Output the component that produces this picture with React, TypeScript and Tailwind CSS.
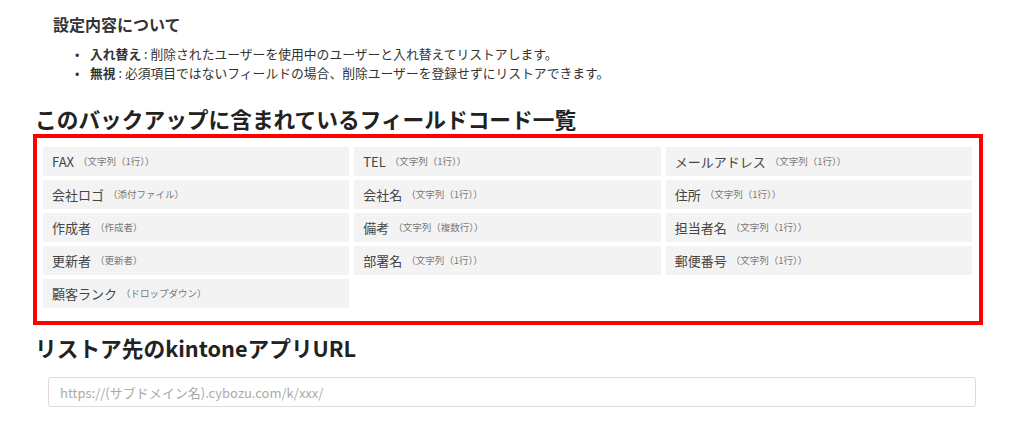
const fields: { name: string; type: string }[] = [
  { name: "FAX", type: "（文字列（1行））" },
  { name: "TEL", type: "（文字列（1行））" },
  { name: "メールアドレス", type: "（文字列（1行））" },
  { name: "会社ロゴ", type: "（添付ファイル）" },
  { name: "会社名", type: "（文字列（1行））" },
  { name: "住所", type: "（文字列（1行））" },
  { name: "作成者", type: "（作成者）" },
  { name: "備考", type: "（文字列（複数行））" },
  { name: "担当者名", type: "（文字列（1行））" },
  { name: "更新者", type: "（更新者）" },
  { name: "部署名", type: "（文字列（1行））" },
  { name: "郵便番号", type: "（文字列（1行））" },
  { name: "顧客ランク", type: "（ドロップダウン）" },
];

const font = "font-['Noto_Sans_CJK_JP','Noto_Sans',sans-serif]";

export default function App() {
  return (
    <div className={`${font} min-h-[441px] bg-white pt-[12px] text-[#333]`}>
      <h3 className="pl-[53px] text-[16px] font-bold leading-[24px]">設定内容について</h3>
      <ul className="mt-[8px] pl-[75px] text-[12.8px] leading-[19px]">
        <li className="flex">
          <span className="w-[15px]">•</span>
          <span>
            <b>入れ替え</b> : 削除されたユーザーを使用中のユーザーと入れ替えてリストアします。
          </span>
        </li>
        <li className="flex">
          <span className="w-[15px]">•</span>
          <span>
            <b>無視</b> : 必須項目ではないフィールドの場合、削除ユーザーを登録せずにリストアできます。
          </span>
        </li>
      </ul>

      <h2 className="mt-[21px] pl-[35px] text-[21.7px] font-bold leading-[31px] text-[#222]">
        このバックアップに含まれているフィールドコード一覧
      </h2>
      <div className="ml-[33px] w-[950px] border-4 border-[#ff0000] pt-[9px] pl-[6px] pr-[7px] pb-[13px]">
        <div className="grid grid-cols-3 gap-x-[5px] gap-y-[4px]">
          {fields.map((f) => (
            <div key={f.name} className="flex h-[29px] items-center bg-[#f3f3f3] pl-[9px]">
              <span className="text-[13px] text-[#444]">{f.name}</span>
              <span className="ml-[4px] text-[9.5px] text-[#777]">{f.type}</span>
            </div>
          ))}
        </div>
      </div>

      <h2 className="mt-[8px] pl-[35px] text-[21.7px] font-bold leading-[30px] text-[#222]">
        リストア先のkintoneアプリURL
      </h2>
      <div className="ml-[48px] mt-[14px] w-[928px]">
        <input
          className="h-[30px] w-full rounded-[3px] border border-[#ddd] px-[11px] text-[13px] placeholder:text-[#aaa] outline-none"
          placeholder="https://(サブドメイン名).cybozu.com/k/xxx/"
        />
      </div>
    </div>
  );
}
